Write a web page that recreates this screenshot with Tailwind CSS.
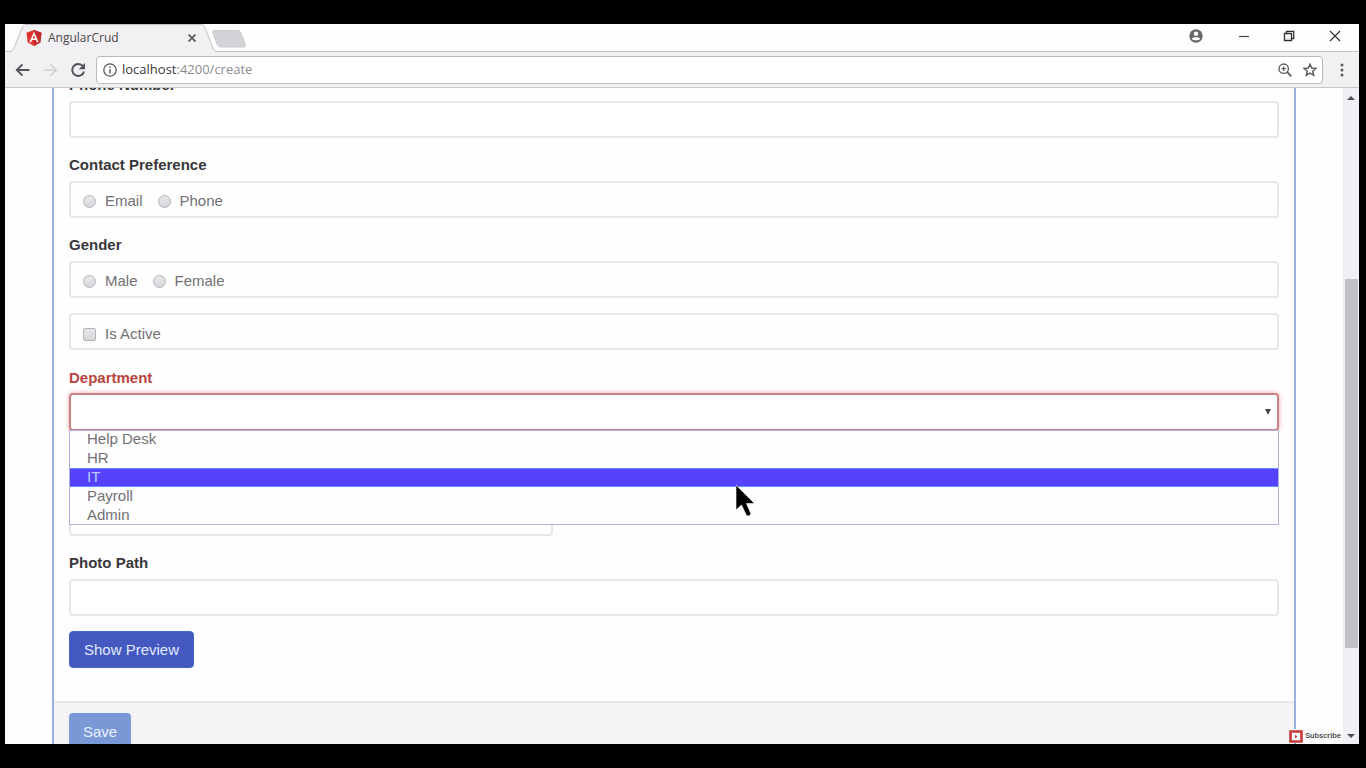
<!DOCTYPE html>
<html lang="en">
<head>
<meta charset="utf-8">
<title>AngularCrud</title>
<script src="https://cdn.jsdelivr.net/npm/@tailwindcss/browser@4"></script>
</head>
<body class="flex h-screen flex-col overflow-hidden bg-black pt-6 pr-[7px] pb-6 pl-[5px] font-['Liberation_Sans',sans-serif] text-[15px] text-[#727075]">
<div class="relative flex min-h-0 flex-1 flex-col bg-[#fefefe]">

  <!-- Tab strip -->
  <header class="relative flex h-7 shrink-0 items-center border-b border-[#c4c2c6] font-['Open_Sans',sans-serif]">
    <svg class="absolute top-0 left-0 h-7 w-[245px]" viewBox="0 0 245 28" fill="none" aria-hidden="true">
      <path d="M0 28H4C7 28 8 26 9 24L17 4C18 1 19 .5 21 .5H196C198 .5 199 1 200 4L208 24C209 26 210 27.5 213 27.5V28Z" fill="#f2f0f3"/>
      <path d="M0 27.500H4C7 27.500 8 26 9 24L17 4C18 1 19 .5 21 .5H196C198 .5 199 1 200 4L208 24C209 26 210 27.500 213 27.500" stroke="#c4c2c6"/>
      <path d="M209 6.500H232C234 6.500 235 7 236 9L240 20C241 22 240 23 238 23H216C214 23 213 22 212 20L208 9C207 7.500 208 6.500 209 6.500Z" fill="#d4d2d6" stroke="#cccace"/>
    </svg>
    <div class="relative flex w-[195px] items-center pl-[21px]">
      <svg class="h-4 w-4" viewBox="0 0 16 16" aria-hidden="true">
        <path d="M8 0L15.500 2.700 14.300 12.500 8 16 1.700 12.500.5 2.700Z" fill="#e0332f"/>
        <path d="M8 0L15.500 2.700 14.300 12.500 8 16Z" fill="#c42a2c"/>
        <path fill-rule="evenodd" d="M8 1.800L3.300 12.200H5.100L6 9.900H10L10.900 12.200H12.700ZM8 5.200L9.400 8.400H6.600Z" fill="#fff"/>
      </svg>
      <span class="ml-1.5 flex-1 text-xs text-[#48464a]">AngularCrud</span>
      <button class="flex h-4 w-4 items-center justify-center" aria-label="Close tab">
        <svg class="h-2 w-2" viewBox="0 0 8 8" stroke="#5a585c" stroke-width="1.700"><path d="M.5.5L7.500 7.500M7.500.5L.5 7.500"/></svg>
      </button>
    </div>
    <div class="ml-auto flex items-center pr-[17px] pb-1">
      <button aria-label="Profile" class="mr-[35px]">
        <svg class="block h-3.5 w-3.5" viewBox="0 0 14 14"><circle cx="7" cy="7" r="6.700" fill="#69676b"/><circle cx="7" cy="4.700" r="2.200" fill="#fff"/><path d="M2.800 9.700C4 7.900 10 7.900 11.200 9.700 10 11.900 4 11.900 2.800 9.700Z" fill="#fff"/></svg>
      </button>
      <button aria-label="Minimize" class="mr-[33px]">
        <svg class="block h-3 w-3" viewBox="0 0 12 12" stroke="#444246" stroke-width="1.200"><path d="M1 6.500H11"/></svg>
      </button>
      <button aria-label="Restore" class="mr-[33px]">
        <svg class="block h-3 w-3" viewBox="0 0 12 12" fill="none" stroke="#333135" stroke-width="1.300"><path d="M1.500 3.500H8.500V10.500H1.500ZM3.500 3.500V1.300H10.700V8.500H8.500"/></svg>
      </button>
      <button aria-label="Close">
        <svg class="block h-3.5 w-3.5" viewBox="0 0 14 14" stroke="#333135" stroke-width="1.200"><path d="M2 2L12 12M12 2L2 12"/></svg>
      </button>
    </div>
  </header>

  <!-- Toolbar -->
  <nav class="flex h-9 shrink-0 items-center border-b border-[#c8c6ca] bg-[#f2f0f3] pr-2.5 pl-2.5">
    <button aria-label="Back" class="mr-[11px]">
      <svg class="block h-4 w-4" viewBox="0 0 16 16" fill="none" stroke="#555357" stroke-width="1.900"><path d="M14.500 8H2M7.500 2.300L1.800 8 7.500 13.700"/></svg>
    </button>
    <button aria-label="Forward" class="mr-3">
      <svg class="block h-4 w-4" viewBox="0 0 16 16" fill="none" stroke="#d2d0d4" stroke-width="1.700"><path d="M1.500 8H14M8.500 2.300L14.200 8 8.500 13.700"/></svg>
    </button>
    <button aria-label="Reload" class="mr-2.5">
      <svg class="block h-4 w-4" viewBox="0 0 16 16"><path d="M13 4.300A6 6 0 1 0 14 9.500" fill="none" stroke="#555357" stroke-width="2"/><path d="M15 1V7.200H8.800Z" fill="#555357"/></svg>
    </button>
    <div class="flex h-7 flex-1 items-center rounded-sm border border-[#bcbabe] bg-white pr-[5px] pl-1.5">
      <svg class="h-3.5 w-3.5" viewBox="0 0 14 14" fill="none" stroke="#59575b" stroke-width="1.300" aria-hidden="true"><circle cx="7" cy="7" r="6.200"/><path d="M7 6.200V10.500M7 3.500V5" stroke-width="1.500"/></svg>
      <p class="ml-[5px] flex-1 font-['Open_Sans',sans-serif] text-[13px] text-[#8d8b8f]"><span class="text-[#3c3a3e]">localhost</span>:4200/create</p>
      <button aria-label="Zoom" class="mr-[11px]">
        <svg class="block h-3.5 w-3.5" viewBox="0 0 14 14" fill="none" stroke="#5f5d61"><circle cx="5.700" cy="5.700" r="4.700" stroke-width="1.400"/><path d="M9.200 9.200L13.300 13.300" stroke-width="1.900"/><path d="M3.500 5.700H7.900M5.700 3.500V7.900" stroke-width="1.200"/></svg>
      </button>
      <button aria-label="Bookmark">
        <svg class="block h-3.5 w-3.5" viewBox="0 0 14 14" fill="none" stroke="#5f5d61" stroke-width="1.500"><path d="M7 1.300L8.700 5.100 12.900 5.500 9.700 8.200 10.700 12.300 7 10.100 3.300 12.300 4.300 8.200 1.100 5.500 5.300 5.100Z"/></svg>
      </button>
    </div>
    <button aria-label="Menu" class="ml-3">
      <svg class="block h-3.5 w-3.5" viewBox="0 0 14 14" fill="#5f5d61"><circle cx="7" cy="2" r="1.500"/><circle cx="7" cy="7" r="1.500"/><circle cx="7" cy="12" r="1.500"/></svg>
    </button>
  </nav>

  <!-- Page -->
  <div class="flex min-h-0 flex-1">
    <main class="min-w-0 flex-1 overflow-hidden px-[47px]">
      <form class="-mt-[15px] border-x-2 border-[#9aafdf]">
        <div class="flex flex-col px-[15px] pb-[33px]">
          <label for="phone" class="mb-1 leading-6 font-bold text-[#39373b]">Phone Number</label>
          <input id="phone" type="text" class="mb-[15px] h-[37px] rounded border-2 border-[#e8e6ea] bg-white px-3">

          <fieldset class="mb-[15px]">
            <legend class="mb-1 leading-6 font-bold text-[#39373b]">Contact Preference</legend>
            <div class="flex h-[37px] items-center rounded border-2 border-[#e8e6ea] px-3 pt-[3px]">
              <input id="c-email" name="contact" type="radio" class="h-[13px] w-[13px] appearance-none rounded-full border border-[#b5b3b7] bg-linear-to-b from-[#e9e7eb] to-[#d8d6da]">
              <label for="c-email" class="mr-[15px] ml-[9px]">Email</label>
              <input id="c-phone" name="contact" type="radio" class="h-[13px] w-[13px] appearance-none rounded-full border border-[#b5b3b7] bg-linear-to-b from-[#e9e7eb] to-[#d8d6da]">
              <label for="c-phone" class="ml-[9px]">Phone</label>
            </div>
          </fieldset>

          <fieldset class="mb-[15px]">
            <legend class="mb-1 leading-6 font-bold text-[#39373b]">Gender</legend>
            <div class="flex h-[37px] items-center rounded border-2 border-[#e8e6ea] px-3 pt-[3px]">
              <input id="g-male" name="gender" type="radio" class="h-[13px] w-[13px] appearance-none rounded-full border border-[#b5b3b7] bg-linear-to-b from-[#e9e7eb] to-[#d8d6da]">
              <label for="g-male" class="mr-[15px] ml-[9px]">Male</label>
              <input id="g-female" name="gender" type="radio" class="h-[13px] w-[13px] appearance-none rounded-full border border-[#b5b3b7] bg-linear-to-b from-[#e9e7eb] to-[#d8d6da]">
              <label for="g-female" class="ml-[9px]">Female</label>
            </div>
          </fieldset>

          <div class="mb-4 flex h-[37px] items-center rounded border-2 border-[#e8e6ea] px-3 pt-[5px]">
            <input id="active" type="checkbox" class="h-[13px] w-[13px] appearance-none rounded-xs border border-[#b5b3b7] bg-linear-to-b from-[#e9e7eb] to-[#d8d6da]">
            <label for="active" class="ml-[9px]">Is Active</label>
          </div>

          <label for="department" class="mb-[3px] leading-6 font-bold text-[#b9453f]">Department</label>
          <div class="relative mb-[68px]">
            <select id="department" class="block h-[38px] w-full appearance-none rounded border-2 border-[#c88286] bg-white px-3 shadow-[0_0_4px_#f0a0a0]">
              <option></option><option>Help Desk</option><option>HR</option><option>IT</option><option>Payroll</option><option>Admin</option>
            </select>
            <svg class="pointer-events-none absolute top-4 right-2 h-1.5 w-1.5" viewBox="0 0 6 6" fill="#48464a" aria-hidden="true"><path d="M0 0H6L3 6Z"/></svg>
            <ul class="absolute top-[37px] left-0 z-10 w-full bg-[#fefefe] leading-[17px] outline outline-[#b3b2de] -outline-offset-1">
              <li class="px-[18px] pb-0.5">Help Desk</li>
              <li class="px-[18px] pb-0.5">HR</li>
              <li class="border-y border-[#5c8eff] bg-[#5641ff] px-[18px] pb-0.5 leading-[15px] text-[#b9c9ff]">IT</li>
              <li class="px-[18px] pb-0.5">Payroll</li>
              <li class="px-[18px] pb-0.5">Admin</li>
            </ul>
            <svg class="absolute top-[92px] left-[667px] z-20 h-8 w-5" viewBox="0 0 20 32" aria-hidden="true"><path d="M0 0V25L5.500 20 10.500 30.500Q13 32 15 29L10.500 18.500H18.500Z" fill="#000" stroke="#fff" stroke-width=".6"/></svg>
          </div>

          <input type="text" aria-label="Date of Birth" class="mb-[15px] h-[37px] w-2/5 rounded border-2 border-[#e8e6ea] bg-white px-3">

          <label for="photo" class="mb-1 leading-6 font-bold text-[#39373b]">Photo Path</label>
          <input id="photo" type="text" class="mb-[15px] h-[37px] rounded border-2 border-[#e8e6ea] bg-white px-3">

          <button type="button" class="h-[37px] self-start rounded border border-[#3f68c8] bg-[#4359c0] px-3.5 pt-px text-[#e2eaff]">Show Preview</button>
        </div>
        <div class="border-t-2 border-[#e8e6ea] bg-[#f5f3f6] px-[15px] py-2.5">
          <button type="submit" class="h-[37px] rounded bg-[#7a97d6] px-3.5 pt-px text-[#eaf0ff]">Save</button>
        </div>
      </form>
    </main>

    <!-- Scroll bar -->
    <div class="flex w-4 shrink-0 flex-col items-center bg-[#f1eff3] pt-1.5 pb-1" aria-hidden="true">
      <svg class="h-2 w-2" viewBox="0 0 8 8" fill="#504e52"><path d="M0 6L4 2 8 6Z"/></svg>
      <div class="mt-[177px] h-[369px] w-[13px] bg-[#c2c0c4]"></div>
      <svg class="mt-auto h-2 w-2" viewBox="0 0 8 8" fill="#504e52"><path d="M0 2L4 6 8 2Z"/></svg>
    </div>
  </div>

  <!-- Subscribe badge -->
  <a href="#" class="absolute right-4 bottom-px z-30 flex h-3.5 items-center gap-0.5 bg-[#fafafa] pr-0.5 font-['Roboto',sans-serif] text-[8px] font-medium text-[#48464a]">
    <svg class="h-[13px] w-3.5" viewBox="0 0 14 13" aria-hidden="true"><path d="M1.500 1.500H12.500V11.500H1.500Z" fill="#fff" stroke="#c8373c" stroke-width="2.600"/><path d="M6 4.800V8.200L8.500 6.500Z" fill="#a83038"/></svg>
    Subscribe
  </a>
</div>
</body>
</html>
